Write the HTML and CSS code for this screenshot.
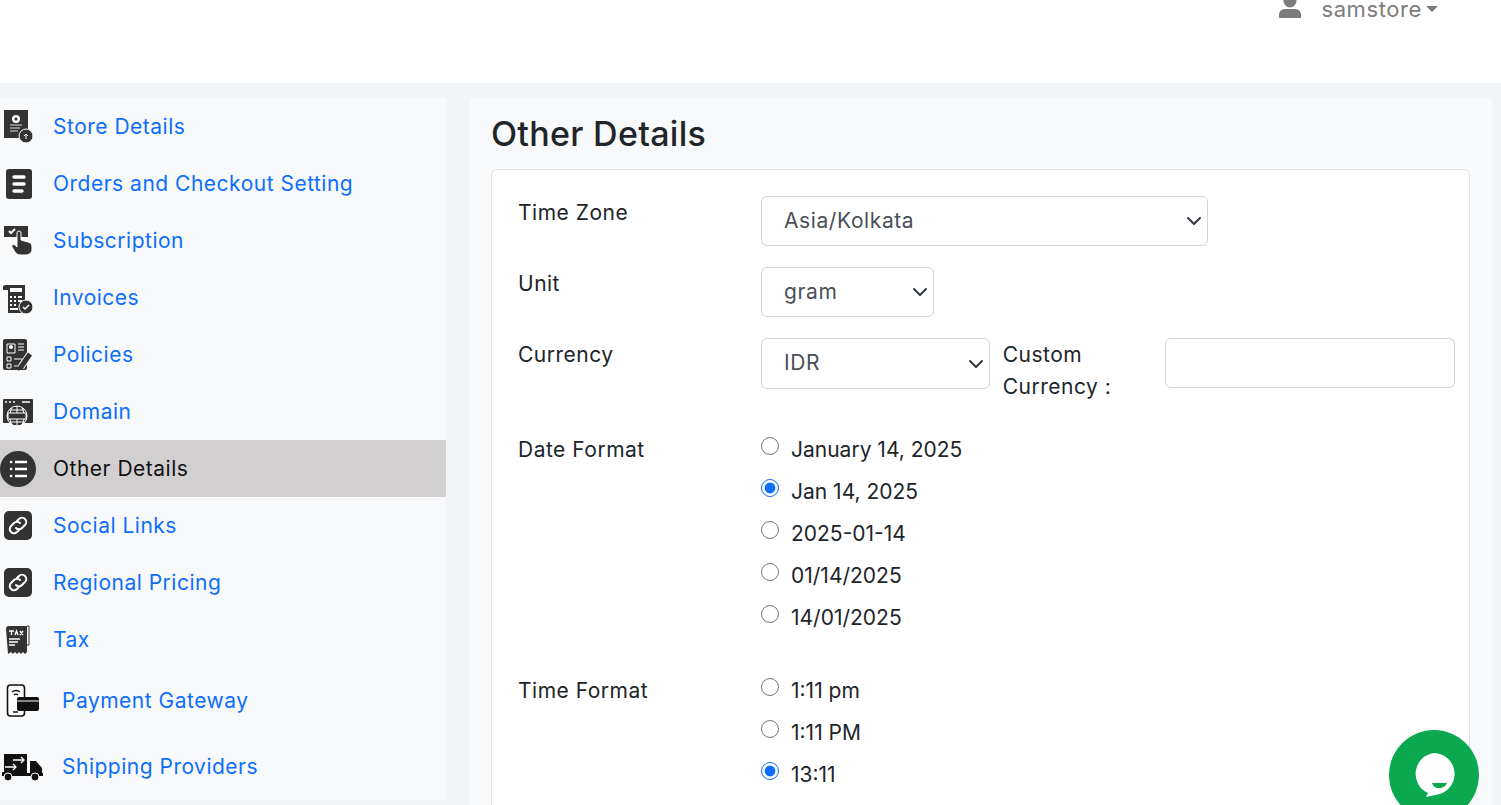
FILE: index.html
```html
<!DOCTYPE html>
<html>
  <head>
    <link rel="stylesheet" href="styles.css">
  </head>
  <body>
    <div class="top-bar">
      <svg class="user-icon" viewBox="0 0 22 22"><circle cx="11" cy="5" r="6.500"/><path d="M0 22v-3c0-4 3-6 6-6h10c3 0 6 2 6 6v3z"/></svg>
      <span class="user-name">samstore</span>
      <span class="caret"></span>
    </div>
    <div class="page">
      <div class="side-nav">
        <a class="nav-item"><span class="nav-icon"><svg width="34" height="34" viewBox="0 0 34 34"><path fill="#333" d="M4 0h24v28H4z"/><circle cx="16" cy="9" r="4" fill="#fff"/><circle cx="16" cy="9" r="1.600" fill="#333"/><path stroke="#ddd" stroke-width="1.200" d="M10 15h12M10 18h10M10 21h8"/><circle cx="26" cy="26" r="7" fill="#333" stroke="#fff"/><path stroke="#fff" d="M26 29v-5M24 26l2-2 2 2" fill="none"/></svg></span>Store Details</a>
        <a class="nav-item"><span class="nav-icon"><svg width="34" height="34" viewBox="0 0 34 34"><rect x="6" y="2" width="26" height="30" rx="3" fill="#333"/><path stroke="#fff" stroke-width="3.400" stroke-linecap="round" d="M14 10h10M14 17h10M14 24h8"/></svg></span>Orders and Checkout Setting</a>
        <a class="nav-item"><span class="nav-icon"><svg width="34" height="34" viewBox="0 0 34 34"><path fill="#333" d="M4 2h24v11H4z"/><path stroke="#fff" stroke-width="2" fill="none" d="M9 7l2 2 4-4"/><path fill="#333" stroke="#fff" d="M17 9a2 2 0 0 1 4 0v7l7 2c3 1 4 2 4 5v2c0 4-3 6-7 6h-4c-3 0-5-1-6-3l-3-5c-1-2 1-3 3-2l2 2z"/></svg></span>Subscription</a>
        <a class="nav-item"><span class="nav-icon"><svg width="34" height="34" viewBox="0 0 34 34"><path fill="#333" d="M3 6c0-2 3-2 4-2h18v28H8V9H3z"/><path fill="#fff" d="M10 7h12v4H10zM10 15h2v2h-2zM14 15h2v2h-2zM18 15h4v2h-4zM10 19h2v2h-2zM14 19h2v2h-2zM18 19h4v2h-4zM10 23h2v2h-2zM14 23h2v2h-2zM10 27h8v2h-8z"/><circle cx="26" cy="26" r="7" fill="#333" stroke="#fff"/><path stroke="#fff" stroke-width="1.500" fill="none" d="M23 26l2 2 4-4"/></svg></span>Invoices</a>
        <a class="nav-item"><span class="nav-icon"><svg width="34" height="34" viewBox="0 0 34 34"><rect x="3" y="1" width="24" height="31" rx="2" fill="#333"/><path stroke="#fff" fill="none" d="M7 6h8v9H7zM18 6h6M18 9h6M18 12h6M7 19h4v4H7zM7 26h4v4H7zM14 21h8M14 28h6"/><circle cx="11" cy="9" r="2" fill="#fff"/><path stroke="#fff" stroke-width="7" d="M21 29l9-13"/><path stroke="#333" stroke-width="5" d="M21 29l9-13"/><path fill="#333" d="M18 33l1-6 4 3z"/></svg></span>Policies</a>
        <a class="nav-item"><span class="nav-icon"><svg width="34" height="34" viewBox="0 0 34 34"><rect x="3" y="4" width="30" height="24" rx="1" fill="#333"/><path stroke="#fff" stroke-width="1.500" d="M5 7h2M9 7h2M13 7h2M22 7h8"/><circle cx="17" cy="21" r="10" fill="#333" stroke="#fff"/><path stroke="#fff" fill="none" d="M7 21h20M17 11v20M10 15h14M10 27h14M12 13c-3 5-3 12 0 17M22 13c3 5 3 12 0 17"/><rect x="8" y="18" width="18" height="6" fill="#333" stroke="#fff"/></svg></span>Domain</a>
        <a class="nav-item nav-item-active"><span class="nav-icon"><svg width="36" height="36" viewBox="0 0 36 36"><circle cx="18" cy="18" r="18" fill="#333"/><path stroke="#fff" stroke-width="2.600" d="M15 11h12M15 18h12M15 25h12"/><path stroke="#fff" stroke-width="2.600" stroke-linecap="round" d="M11 11h.1M11 18h.1M11 25h.1"/></svg></span>Other Details</a>
        <a class="nav-item"><span class="nav-icon"><svg width="34" height="34" viewBox="0 0 34 34"><rect x="4" y="2" width="28" height="29" rx="5" fill="#333"/><path stroke="#fff" stroke-width="2" fill="none" stroke-linecap="round" d="M17 12l2-2a4 4 0 0 1 6 6l-3 3a4 4 0 0 1-6 0M19 21l-2 2a4 4 0 0 1-6-6l3-3a4 4 0 0 1 6 0"/></svg></span>Social Links</a>
        <a class="nav-item"><span class="nav-icon"><svg width="34" height="34" viewBox="0 0 34 34"><rect x="4" y="2" width="28" height="29" rx="5" fill="#333"/><path stroke="#fff" stroke-width="2" fill="none" stroke-linecap="round" d="M17 12l2-2a4 4 0 0 1 6 6l-3 3a4 4 0 0 1-6 0M19 21l-2 2a4 4 0 0 1-6-6l3-3a4 4 0 0 1 6 0"/></svg></span>Regional Pricing</a>
        <a class="nav-item"><span class="nav-icon"><svg width="34" height="34" viewBox="0 0 34 34"><path fill="#333" d="M6 6a3 3 0 0 1 3-3h18v26l-2 2-2-2-2 2-2-2-2 2-2-2-2 2-2-2-3 2z"/><path fill="none" stroke="#333" d="M27 3h2v19h-2"/><path stroke="#fff" stroke-width="1.300" d="M9 16h11M9 19h9M9 22h6"/><path stroke="#fff" stroke-width="1.400" fill="none" d="M9 8h5M11.500 8v4M15 12l1.500-4 1.500 4M20 8l3 4M23 8l-3 4"/></svg></span>Tax</a>
        <a class="nav-item nav-item-wide"><span class="nav-icon"><svg width="40" height="36" viewBox="0 0 40 36"><rect x="7.500" y="2" width="17" height="31" rx="3" fill="#fff" stroke="#111" stroke-width="1.600"/><path stroke="#111" stroke-width="1.300" fill="none" d="M12 9c2-2 6-2 8 0M14 12c1-1 3-1 4 0"/><rect x="17" y="14" width="22" height="14" rx="2" fill="#111"/><path stroke="#fff" d="M17 18h22"/><path stroke="#111" stroke-width="1.500" d="M13 29h5"/></svg></span>Payment Gateway</a>
        <a class="nav-item nav-item-wide"><span class="nav-icon"><svg width="44" height="30" viewBox="0 0 44 30"><path fill="#111" d="M4 2h23v21H2v-3h2zM30 9h6l6 7v7H30z"/><rect x="2" y="21" width="41" height="3" fill="#111"/><circle cx="8" cy="25" r="4" fill="#111" stroke="#fff"/><circle cx="35" cy="25" r="4" fill="#111" stroke="#fff"/><path stroke="#fff" stroke-width="1.300" fill="none" d="M13 8h11M21 5l3 3-3 3M5 15h11M13 12l3 3-3 3"/></svg></span>Shipping Providers</a>
      </div>
      <div class="main">
        <h2 class="page-title">Other Details</h2>
        <div class="form-card">
          <div class="form-row">
            <label class="row-label">Time Zone</label>
            <select class="select select-zone"><option>Asia/Kolkata</option></select>
          </div>
          <div class="form-row">
            <label class="row-label">Unit</label>
            <select class="select select-unit"><option>gram</option></select>
          </div>
          <div class="form-row">
            <label class="row-label">Currency</label>
            <select class="select select-currency"><option>IDR</option></select>
            <label class="custom-label">Custom Currency :</label>
            <input class="text-input" type="text">
          </div>
          <div class="form-row date-row">
            <label class="row-label">Date Format</label>
            <div class="radio-list">
              <label class="radio-line"><input type="radio" name="date">January 14, 2025</label>
              <label class="radio-line"><input type="radio" name="date" checked>Jan 14, 2025</label>
              <label class="radio-line"><input type="radio" name="date">2025-01-14</label>
              <label class="radio-line"><input type="radio" name="date">01/14/2025</label>
              <label class="radio-line"><input type="radio" name="date">14/01/2025</label>
            </div>
          </div>
          <div class="form-row time-row">
            <label class="row-label">Time Format</label>
            <div class="radio-list">
              <label class="radio-line"><input type="radio" name="time">1:11 pm</label>
              <label class="radio-line"><input type="radio" name="time">1:11 PM</label>
              <label class="radio-line"><input type="radio" name="time" checked>13:11</label>
            </div>
          </div>
        </div>
      </div>
    </div>
    <div class="chat-button">
      <svg width="42" height="46" viewBox="0 0 42 46"><path fill="#fff" d="M21 1a21 21 0 0 1 6 41l-14 3 2-4A21 21 0 0 1 21 1z"/><path fill="#0aa84f" d="M19 31h15c-1 3-4 5-8 5s-6-2-7-5z"/></svg>
    </div>
  </body>
</html>
```

FILE: styles.css
```css
* {
  box-sizing: border-box;
}
html,
body {
  height: 805px;
  overflow: hidden;
}
body {
  margin: 0;
  background-color: #f2f5f7;
  font-family: Inter, "Noto Sans", sans-serif;
  font-size: 21px;
  color: #212529;
}
.top-bar {
  height: 83px;
  background-color: #fff;
  display: flex;
  align-items: flex-start;
  justify-content: flex-end;
  padding-right: 63px;
  color: #7c7c7c;
}
.user-icon {
  width: 22px;
  height: 22px;
  margin-top: -4px;
  fill: #7c7c7c;
  margin-right: 20px;
}
.user-name {
  margin-top: -4px;
  font-size: 22px;
  line-height: 26px;
  letter-spacing: 0.6px;
}
.caret {
  width: 0;
  height: 0;
  margin: 6px 0 0 4px;
  border-top: 6px solid #7c7c7c;
  border-left: 6px solid transparent;
  border-right: 6px solid transparent;
}
.page {
  display: flex;
  gap: 23px;
  padding-top: 15px;
}
.side-nav {
  width: 446px;
  height: 702px;
  background-color: #f8f9fa;
  flex: none;
}
.nav-item {
  display: flex;
  align-items: center;
  height: 57px;
  padding-bottom: 1px;
  color: #0d6efd;
  font-size: 21px;
  letter-spacing: 0.5px;
}
.nav-item-active {
  background-color: #d1cfcf;
  color: #111;
}
.nav-item-wide {
  height: 66px;
}
.nav-item-wide .nav-icon {
  width: 62px;
}
.nav-icon {
  width: 53px;
  margin-top: 1px;
  display: flex;
  align-items: center;
  flex: none;
}
.main {
  width: 1023px;
  height: 780px;
  background-color: #f8f9fa;
  padding: 16px 22px 0;
}
.page-title {
  margin: 0 0 15px;
  font-size: 34px;
  line-height: 40px;
  font-weight: 500;
  letter-spacing: 0.3px;
}
.form-card {
  width: 979px;
  height: 700px;
  background-color: #fff;
  border: 1px solid #dfe2e6;
  border-radius: 6px;
  padding: 26px 14px 0 26px;
}
.form-row {
  display: flex;
  align-items: flex-start;
  margin-bottom: 21px;
}
.row-label {
  width: 243px;
  flex: none;
  padding-top: 1px;
  line-height: 32px;
  letter-spacing: 0.5px;
}
.select {
  appearance: none;
  height: 50px;
  background-color: #fff;
  background-image: url("data:image/svg+xml,%3csvg xmlns='http://www.w3.org/2000/svg' viewBox='0 0 16 16'%3e%3cpath fill='none' stroke='%23343a40' stroke-linecap='round' stroke-linejoin='round' stroke-width='2' d='m2 5 6 6 6-6'/%3e%3c/svg%3e");
  background-repeat: no-repeat;
  background-position: right 5px center;
  background-size: 16px 16px;
  border: 1px solid #ced4da;
  border-radius: 6px;
  padding: 0 22px 2px;
  font: inherit;
  letter-spacing: 0.6px;
  color: #495057;
}
.select-zone {
  width: 447px;
}
.select-unit {
  width: 173px;
}
.select-currency {
  width: 229px;
  height: 51px;
}
.custom-label {
  width: 162px;
  margin-left: 13px;
  padding-top: 1px;
  line-height: 32px;
  letter-spacing: 0.5px;
}
.text-input {
  width: 290px;
  height: 50px;
  margin-left: 1px;
  border: 1px solid #ced4da;
  border-radius: 6px;
}
.date-row {
  margin-top: 30px;
  margin-bottom: 41px;
}
.radio-list {
  display: flex;
  flex-direction: column;
  gap: 10px;
}
.radio-line {
  display: flex;
  align-items: center;
  height: 32px;
}
.radio-line input {
  width: 18px;
  height: 18px;
  margin: -6px 12px 0 0;
  accent-color: #0d6efd;
}
.chat-button {
  position: absolute;
  left: 1389px;
  top: 730px;
  width: 90px;
  height: 90px;
  border-radius: 50%;
  background-color: #0aa84f;
  display: flex;
  align-items: center;
  justify-content: center;
}
```
